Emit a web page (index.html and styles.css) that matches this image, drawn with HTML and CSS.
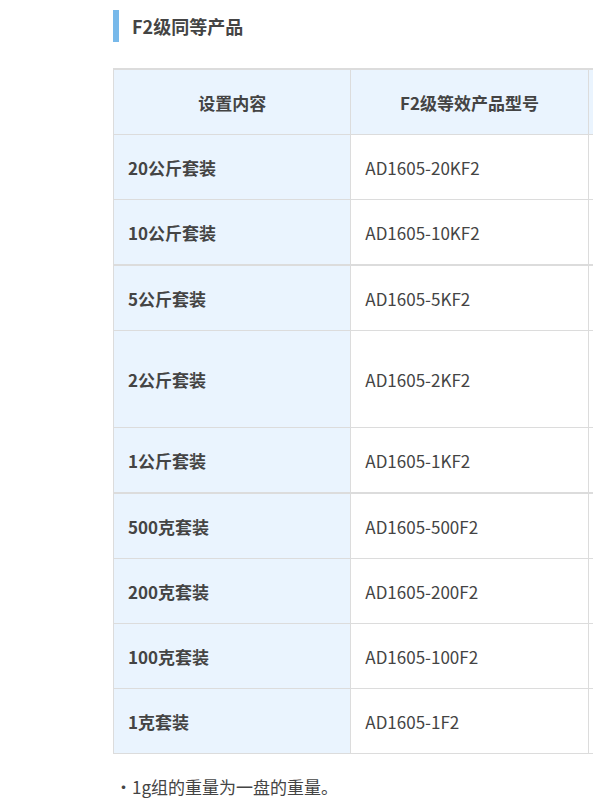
FILE: index.html
```html
<!DOCTYPE html>
<html lang="zh-CN">
<head>
<meta charset="utf-8">
<link rel="stylesheet" href="styles.css">
</head>
<body>
<div class="page">
  <h2 class="heading">F2级同等产品</h2>
  <div class="table-wrap">
    <table class="spec">
      <thead>
        <tr class="row">
          <th>设置内容</th>
          <th>F2级等效产品型号</th>
          <th></th>
        </tr>
      </thead>
      <tbody>
        <tr class="row"><th>20公斤套装</th><td>AD1605-20KF2</td><td></td></tr>
        <tr class="row group-end"><th>10公斤套装</th><td>AD1605-10KF2</td><td></td></tr>
        <tr class="row"><th>5公斤套装</th><td>AD1605-5KF2</td><td></td></tr>
        <tr class="row tall"><th>2公斤套装</th><td>AD1605-2KF2</td><td></td></tr>
        <tr class="row group-end"><th>1公斤套装</th><td>AD1605-1KF2</td><td></td></tr>
        <tr class="row"><th>500克套装</th><td>AD1605-500F2</td><td></td></tr>
        <tr class="row"><th>200克套装</th><td>AD1605-200F2</td><td></td></tr>
        <tr class="row"><th>100克套装</th><td>AD1605-100F2</td><td></td></tr>
        <tr class="row"><th>1克套装</th><td>AD1605-1F2</td><td></td></tr>
      </tbody>
    </table>
  </div>
  <p class="note">・1g组的重量为一盘的重量。</p>
</div>
</body>
</html>
```
FILE: styles.css
```css
html, body {
  margin: 0;
  padding: 0;
  background: #fff;
}
body {
  font-family: "Noto Sans CJK SC", "Noto Sans", sans-serif;
  color: #444;
  overflow: hidden;
}
.page {
  padding: 10px 0 0 113px;
}
.heading {
  margin: 0;
  height: 32px;
  line-height: 32px;
  border-left: 6px solid #78b9ea;
  padding-left: 13px;
  font-size: 18px;
  font-weight: bold;
  color: #444;
}
.table-wrap {
  margin-top: 26px;
  width: 480px;
  overflow: hidden;
}
.spec {
  width: 713px;
  table-layout: fixed;
  border-collapse: separate;
  border-spacing: 0;
  border-top: 2px solid #dcdcdc;
  border-left: 1px solid #dcdcdc;
  font-size: 17px;
}
.spec th, .spec td {
  border-right: 1px solid #dcdcdc;
  border-bottom: 1px solid #dcdcdc;
  padding: 0 14px;
  text-align: left;
  vertical-align: middle;
}
.spec th {
  background: #eaf4fe;
  font-weight: bold;
  color: #444;
}
.spec td {
  color: #444;
  font-weight: normal;
  background: #fff;
}
.spec thead th {
  text-align: center;
}
.row {
  height: 65px;
}
.row.tall {
  height: 97px;
}
.row.group-end {
  height: 66px;
}
.row.group-end th, .row.group-end td {
  border-bottom-width: 2px;
}
.note {
  margin: 20px 0 0 2px;
  font-size: 17px;
  color: #444;
}
```
